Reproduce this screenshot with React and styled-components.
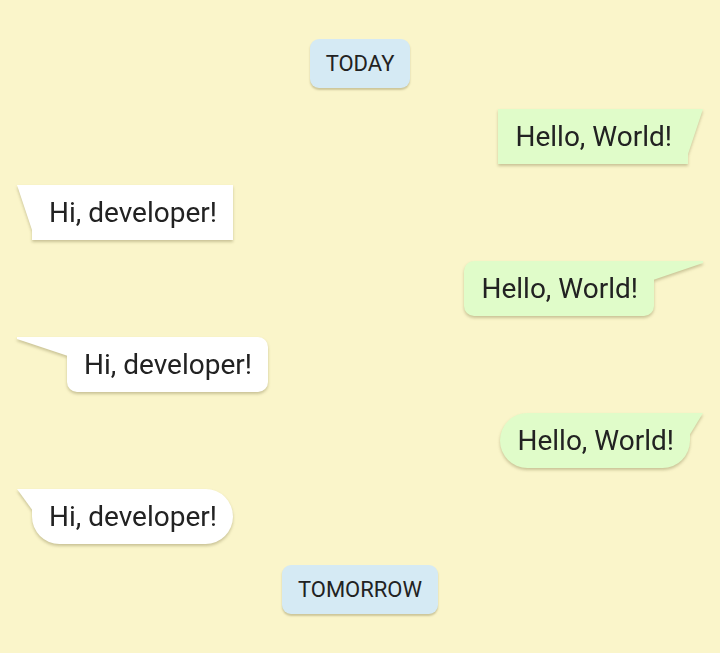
import React from "react";
import styled, { createGlobalStyle, css } from "styled-components";

const Global = createGlobalStyle`
  html, body { margin: 0; padding: 0; background: #faf5ca; }
  body { font-family: Roboto, "Noto Sans", sans-serif; color: #212121; }
`;

const Chat = styled.div`
  display: flex;
  flex-direction: column;
  gap: 21px;
  padding: 39px 17px 39px;
  min-height: 653px;
  box-sizing: border-box;
  background: #faf5ca;
`;

const Row = styled.div`
  display: flex;
  justify-content: ${(p) => (p.$side === "right" ? "flex-end" : p.$side === "left" ? "flex-start" : "center")};
`;

const DatePill = styled.div`
  background: #d5eaf4;
  border-radius: 9px;
  padding: 12px 16px;
  font-size: 22px;
  line-height: 25px;
  color: #222;
  box-shadow: 0 2px 2px rgba(90, 80, 30, 0.28);
`;

const radii = {
  square: "0",
  round: "10px",
  pill: "28px",
};

const Bubble = styled.div`
  position: relative;
  background: ${(p) => (p.$side === "right" ? "#e0fcc9" : "#ffffff")};
  font-size: 28px;
  line-height: 33px;
  padding: 11px 16px 11px 17px;
  color: #222;
  border-radius: ${(p) => radii[p.$shape]};
  ${(p) =>
    p.$side === "right"
      ? css`
          margin-right: ${p.$tail}px;
          border-top-right-radius: 0;
        `
      : css`
          margin-left: ${p.$tail}px;
          border-top-left-radius: 0;
        `}
  filter: drop-shadow(0 2px 1.5px rgba(90, 80, 30, 0.3));

  &::before {
    content: "";
    position: absolute;
    top: 0;
    width: ${(p) => p.$tail + 1}px;
    height: ${(p) => p.$drop}px;
    background: inherit;
    ${(p) =>
      p.$side === "right"
        ? css`
            left: calc(100% - 1px);
            clip-path: polygon(0 0, 100% 0, 100% ${p.$tipY}px, 0 100%);
          `
        : css`
            right: calc(100% - 1px);
            clip-path: polygon(0 0, 100% 0, 100% 100%, 0 ${p.$tipY}px);
          `}
  }
`;

const messages = [
  { side: "right", shape: "square", tail: 15, drop: 48, tipY: 0, text: "Hello, World!" },
  { side: "left", shape: "square", tail: 15, drop: 48, tipY: 0, text: "Hi, developer!" },
  { side: "right", shape: "round", tail: 49, drop: 19, tipY: 2, text: "Hello, World!" },
  { side: "left", shape: "round", tail: 50, drop: 19, tipY: 2, text: "Hi, developer!" },
  { side: "right", shape: "pill", tail: 13, drop: 23, tipY: 0, text: "Hello, World!" },
  { side: "left", shape: "pill", tail: 15, drop: 22, tipY: 0, text: "Hi, developer!" },
];

export default function App() {
  return (
    <>
      <Global />
      <Chat>
        <Row $side="center">
          <DatePill>TODAY</DatePill>
        </Row>
        {messages.map((m, i) => (
          <Row key={i} $side={m.side}>
            <Bubble $side={m.side} $shape={m.shape} $tail={m.tail} $drop={m.drop} $tipY={m.tipY}>
              {m.text}
            </Bubble>
          </Row>
        ))}
        <Row $side="center">
          <DatePill>TOMORROW</DatePill>
        </Row>
      </Chat>
    </>
  );
}
